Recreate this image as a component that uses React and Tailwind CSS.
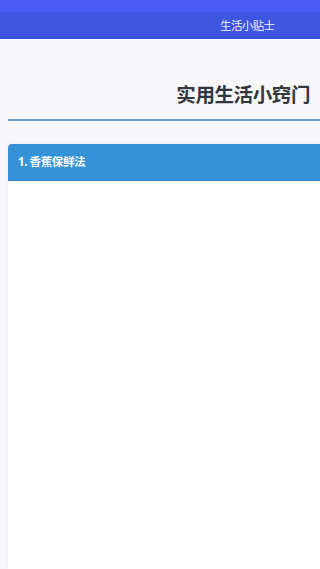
export default function App() {
  return (
    <div
      className="w-[320px] h-[569px] overflow-hidden bg-[#f7f7f9] flex flex-col"
      style={{ fontFamily: '"Noto Sans", "Noto Sans CJK SC", sans-serif' }}
    >
      <div className="h-[12px] shrink-0 bg-[#4a5cf4]" />
      <div className="h-[27px] shrink-0 bg-[#3e55df] flex items-center">
        <span className="ml-[220px] text-[11.5px] text-[#eef0ff] leading-none tracking-[-0.6px]">生活小贴士</span>
      </div>
      <div className="pl-[8px] flex-1 flex flex-col min-h-0">
        <div className="h-[80px] shrink-0 flex items-end justify-end pr-[10px] pb-[15px]">
          <h1 className="text-[19.5px] font-semibold text-[#33363b] leading-none tracking-[-0.4px]">实用生活小窍门</h1>
        </div>
        <div className="h-[2px] shrink-0 bg-[#5d9cc6]" />
        <div className="mt-[23px] flex-1 bg-white rounded-tl-[4px] overflow-hidden shadow-[0_0_2px_rgba(0,0,0,0.08)]">
          <div className="h-[37px] bg-[#3592d6] flex items-center pl-[10px] border-b border-[#2f86c6]">
            <span className="text-[11.5px] font-bold text-white leading-none tracking-[-0.4px]">1. 香蕉保鲜法</span>
          </div>
        </div>
      </div>
    </div>
  );
}
